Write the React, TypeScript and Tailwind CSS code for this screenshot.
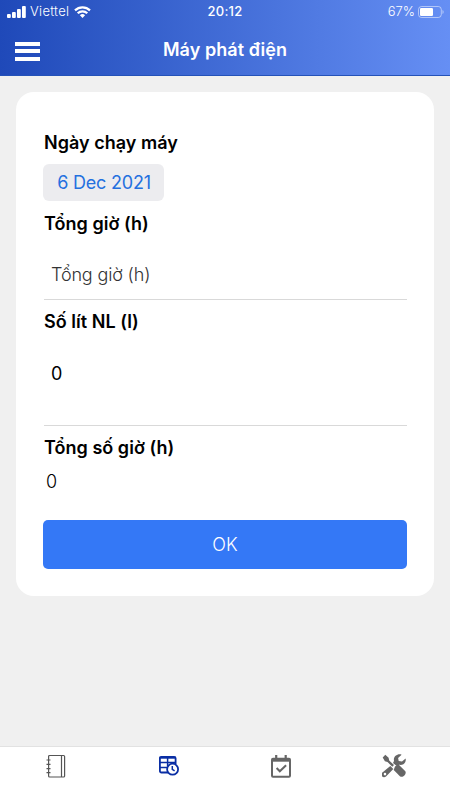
import React from 'react';

const Signal = () => (
  <svg width="19" height="12" viewBox="0 0 19 12" fill="white">
    <rect x="0" y="8" width="3.8" height="4" rx="1" />
    <rect x="5" y="6" width="3.8" height="6" rx="1" />
    <rect x="10" y="3" width="3.8" height="9" rx="1" />
    <rect x="15" y="0" width="3.8" height="12" rx="1" />
  </svg>
);

const Wifi = () => (
  <svg width="17" height="12" viewBox="0 0 17 12" fill="none" stroke="white" strokeWidth="2.2">
    <path d="M1 4.4a10.6 10.6 0 0 1 15 0" />
    <path d="M3.7 7.3a6.8 6.8 0 0 1 9.6 0" />
    <path d="M8.5 12 5.9 9.3a3.7 3.7 0 0 1 5.2 0z" fill="white" stroke="none" />
  </svg>
);

const Battery = () => (
  <svg width="26" height="12" viewBox="0 0 26 12">
    <rect x="0.5" y="0.5" width="22.8" height="11" rx="3" fill="none" stroke="white" strokeOpacity="0.5" />
    <rect x="2" y="2" width="13" height="8" rx="1.2" fill="white" />
    <path d="M24.5 4v4c1.5-.5 1.5-3.5 0-4z" fill="white" fillOpacity="0.55" />
  </svg>
);

const NotebookIcon = () => (
  <svg width="24" height="24" viewBox="0 0 24 24" fill="none" stroke="#555" strokeWidth="1.2">
    <rect x="4.6" y="1.5" width="16" height="21.5" rx="1" />
    <path d="M17.5 1.5V23" />
    <path d="M2.5 6h4M2.5 10.300h4M2.500 14.600h4M2.500 18.700h4" />
  </svg>
);

const TableClockIcon = () => (
  <svg width="24" height="24" viewBox="0 0 24 24" fill="none" stroke="#0a2ea4" strokeWidth="1.8">
    <path d="M11 18.5H4.400a1.500 1.500 0 0 1-1.500-1.500V4.300a1.500 1.500 0 0 1 1.500-1.500h12.700a1.500 1.500 0 0 1 1.500 1.500V10" />
    <path d="M2.500 3.700h16" strokeWidth="2" />
    <path d="M2.500 8.500h16M2.500 13.500h8M10.600 3v9" strokeWidth="1.500" />
    <circle cx="15.600" cy="15.200" r="5.500" fill="white" />
    <path d="M15.300 12v3.400l2.300 1.500" strokeWidth="1.500" />
  </svg>
);

const CalendarCheckIcon = () => (
  <svg width="24" height="24" viewBox="0 0 24 24" fill="none" stroke="#666" strokeWidth="2">
    <rect x="3" y="4.700" width="18" height="18" rx="1" />
    <path d="M3 6h18" strokeWidth="3.400" />
    <path d="M7.200 1v4M16.700 1v4" strokeWidth="2.200" />
    <path d="m7.600 14 3.200 3.300 6.300-6" />
  </svg>
);

const ToolsIcon = () => (
  <svg width="24" height="24" viewBox="0 0 24 24" fill="#666">
    <path d="M3.300.8.700 3.500l2.200 3.800 2.600.700 4.800 4.800 1.700-1.700-4.800-4.700-.6-2.700z" />
    <path d="m13 12.600 3.300-2.300 6.800 6.600c2.300 2.500-2.400 7.700-5.200 5.300l-6.200-6.300z" />
    <path
      fillRule="evenodd"
      d="m8.300 12 3 3-7.300 7.600c-2.700 2.300-6.200-1.100-3.900-3.900zM4.300 20.100a1.300 1.300 0 1 0-2.600 0 1.300 1.300 0 0 0 2.600 0z"
    />
    <path d="M19.600.7c-4-1.500-8.600 1.900-7.600 6.200l-1 2 3.700 3.100 2.400-1.200c4.100.9 7.500-2.400 6.500-6.400L20 7.600l-3.300-.7-.6-2.800z" />
  </svg>
);

const tabs = [
  { name: 'log', Icon: NotebookIcon },
  { name: 'schedule', Icon: TableClockIcon },
  { name: 'check', Icon: CalendarCheckIcon },
  { name: 'tools', Icon: ToolsIcon },
];

const Label: React.FC<{ children: React.ReactNode }> = ({ children }) => (
  <label className="block h-6 text-[18px] leading-6 font-semibold tracking-[0.03px] text-black">{children}</label>
);

export default function App() {
  return (
    <div className="flex h-[800px] w-[450px] flex-col overflow-hidden bg-[#f0f0f0] font-['Inter','Liberation_Sans',sans-serif]">
      <header className="h-[76px] shrink-0 border-b border-[#2452b8] bg-linear-to-r from-[#1f49b9] to-[#668ff4] text-white">
        {/* Status bar */}
        <div className="grid h-[23px] grid-cols-3 items-center text-[13px] leading-[23px]">
          <div className="flex items-center pl-[7px]">
            <Signal />
            <span className="mr-[5px] ml-1 font-light tracking-[0.3px]">Viettel</span>
            <Wifi />
          </div>
          <span className="text-center font-medium tracking-[0.2px]">20:12</span>
          <div className="flex items-center justify-end pr-[6px]">
            <span className="mr-[3px] font-light">67%</span>
            <Battery />
          </div>
        </div>
        {/* Title bar */}
        <div className="grid h-[53px] grid-cols-[60px_1fr_60px] items-center">
          <button className="mt-[3px] ml-[15px] flex w-[25px] flex-col gap-[3.5px]">
            <span className="h-1 bg-white" />
            <span className="h-1 bg-white" />
            <span className="h-1 bg-white" />
          </button>
          <h1 className="text-center text-[18px] leading-6 font-semibold tracking-[0.05px]">Máy phát điện</h1>
        </div>
      </header>

      <main className="flex-1 px-4 pt-4">
        <section className="h-[504px] rounded-[18px] bg-white pt-[39px] pr-[27px] pl-7">
          <Label>Ngày chạy máy</Label>
          <button className="mt-[9px] -ml-px flex h-[37px] w-[121px] items-center justify-center rounded-md bg-[#ececef] pl-px text-[18px] tracking-[-0.2px] text-[#2470df]">
            6 Dec 2021
          </button>
          <div className="mt-[11px]">
            <Label>Tổng giờ (h)</Label>
          </div>
          <div className="flex h-[64px] items-center border-b border-[#d9d9d9] pt-[13px] pl-[7px] text-[18px] font-light tracking-[-0.15px] text-[#333]">
            Tổng giờ (h)
          </div>
          <div className="mt-[10px]">
            <Label>Số lít NL (l)</Label>
          </div>
          <div className="h-[92px] border-b border-[#d9d9d9] pt-[28px] pl-[7px] text-[18px] leading-6 text-black">0</div>
          <div className="mt-[10px]">
            <Label>Tổng số giờ (h)</Label>
          </div>
          <div className="mt-[10px] h-6 pl-0.5 text-[18px] leading-6 font-light text-black">0</div>
          <button className="mt-[26px] -ml-px flex h-[49px] w-[364px] items-center justify-center rounded-[5px] bg-[#3478f6] text-[18px] font-light text-white">
            OK
          </button>
        </section>
      </main>

      <nav className="grid h-[54px] shrink-0 grid-cols-4 border-t border-[#e2e2e2] bg-white">
        {tabs.map(({ name, Icon }) => (
          <button key={name} className="flex justify-center pt-[7px]">
            <Icon />
          </button>
        ))}
      </nav>
    </div>
  );
}
